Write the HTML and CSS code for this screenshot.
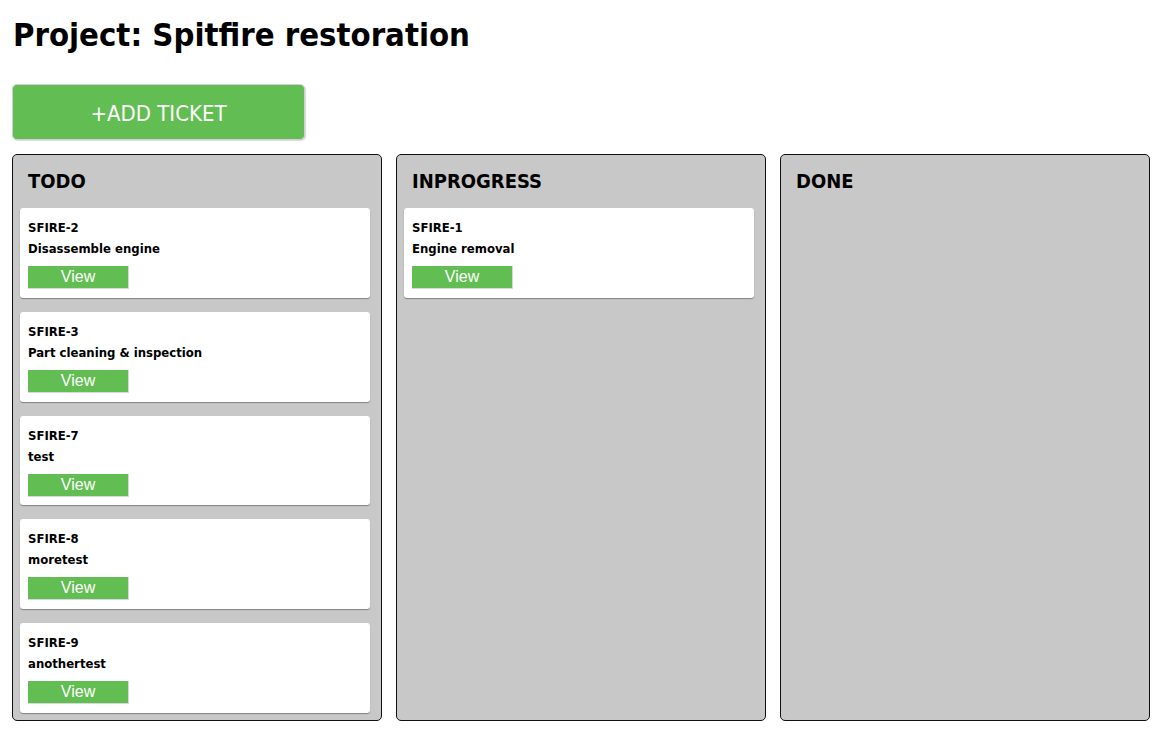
FILE: index.html
```html
<!DOCTYPE html>
<html>
<head>
<meta charset="utf-8">
<title>Project: Spitfire restoration</title>
<link rel="stylesheet" href="styles.css">
</head>
<body>
<div class="page">
  <h1 class="title">Project: Spitfire restoration</h1>
  <button class="add-btn">+ADD TICKET</button>
  <div class="board">
    <section class="column">
      <h2 class="column-title">TODO</h2>
      <div class="card">
        <div class="card-key">SFIRE-2</div>
        <div class="card-name">Disassemble engine</div>
        <button class="view-btn">View</button>
      </div>
      <div class="card">
        <div class="card-key">SFIRE-3</div>
        <div class="card-name">Part cleaning &amp; inspection</div>
        <button class="view-btn">View</button>
      </div>
      <div class="card">
        <div class="card-key">SFIRE-7</div>
        <div class="card-name">test</div>
        <button class="view-btn">View</button>
      </div>
      <div class="card">
        <div class="card-key">SFIRE-8</div>
        <div class="card-name">moretest</div>
        <button class="view-btn">View</button>
      </div>
      <div class="card">
        <div class="card-key">SFIRE-9</div>
        <div class="card-name">anothertest</div>
        <button class="view-btn">View</button>
      </div>
    </section>
    <section class="column">
      <h2 class="column-title">INPROGRESS</h2>
      <div class="card">
        <div class="card-key">SFIRE-1</div>
        <div class="card-name">Engine removal</div>
        <button class="view-btn">View</button>
      </div>
    </section>
    <section class="column">
      <h2 class="column-title">DONE</h2>
    </section>
  </div>
</div>
</body>
</html>
```
FILE: styles.css
```css
html, body {
  margin: 0;
  padding: 0;
  background: #ffffff;
}

body {
  font-family: "DejaVu Sans Condensed", "DejaVu Sans", sans-serif;
  color: #000;
}

.page {
  padding: 0 12px 0 12px;
}

.title {
  margin: 0;
  padding: 15px 0 0 1px;
  font-size: 32.6px;
  line-height: 40px;
  font-weight: bold;
  height: 70px;
  box-sizing: border-box;
}

.add-btn {
  display: block;
  width: 293px;
  height: 56px;
  margin: 14px 0 14px 0;
  background: #62bd52;
  border: 1px solid #d0d0d0;
  border-radius: 5px;
  color: #fff;
  font-family: "DejaVu Sans Condensed", "DejaVu Sans", sans-serif;
  font-size: 22px;
  padding: 2px 0 0 0;
  box-shadow: 1px 1px 1px rgba(0,0,0,0.15);
}

.board {
  display: grid;
  grid-template-columns: 370px 370px 370px;
  gap: 14px;
}

.column {
  box-sizing: border-box;
  height: 567px;
  background: #c8c8c8;
  border: 1px solid #111;
  border-radius: 5px;
  padding: 0 11px 7px 7px;
  display: flex;
  flex-direction: column;
  gap: 14px;
}

.column-title {
  margin: 0;
  padding: 13px 0 0 8px;
  height: 53px;
  box-sizing: border-box;
  font-size: 20px;
  line-height: 26px;
  font-weight: bold;
  margin-bottom: -14px;
}

.card {
  background: #fff;
  border-radius: 3px;
  box-shadow: 0 1px 1px rgba(0,0,0,0.35);
  padding: 9px 8px 8px 8px;
  height: 90px;
  box-sizing: border-box;
}

.card-key,
.card-name {
  font-size: 13px;
  font-weight: bold;
  line-height: 21px;
}

.view-btn {
  display: block;
  margin-top: 7px;
  width: 101px;
  height: 23px;
  padding: 0;
  background: #62bd52;
  color: #fff;
  border: none;
  border-right: 1px solid #d8d8d8;
  border-bottom: 1px solid #d8d8d8;
  font-family: "Liberation Sans", Arial, sans-serif;
  font-size: 16px;
  line-height: 22px;
}
```
